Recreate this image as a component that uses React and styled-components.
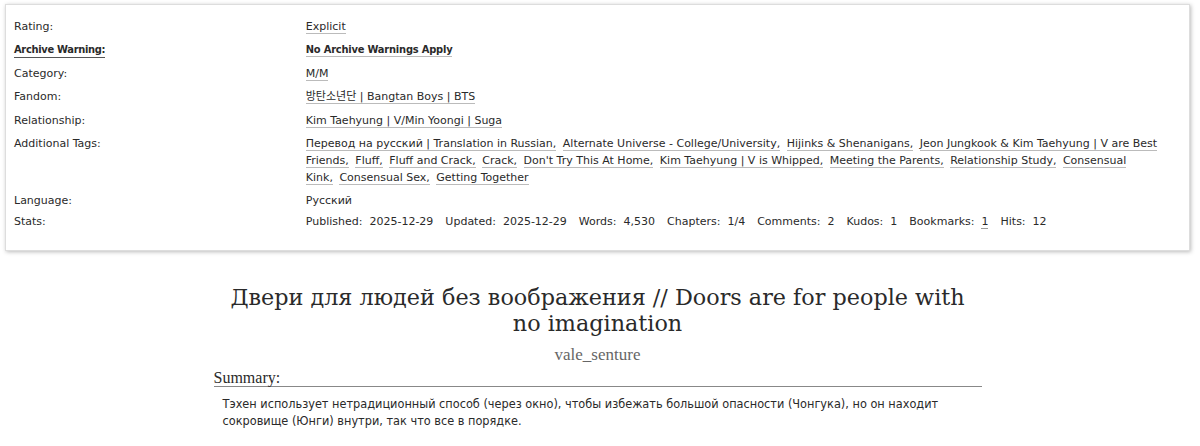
import styled, { createGlobalStyle } from "styled-components";

const GlobalStyle = createGlobalStyle`
  body {
    margin: 0;
    background: #fff;
    color: #2a2a2a;
    font-family: "DejaVu Sans", "Noto Sans CJK KR", sans-serif;
  }
`;

const Page = styled.div`
  padding: 4px 10px 0 5px;
`;

const MetaBox = styled.dl`
  margin: 0;
  width: 1185px;
  box-sizing: border-box;
  border: 1px solid #ddd;
  box-shadow: 1px 1px 4px #bbb;
  padding: 13px 8px 20px;
  display: grid;
  grid-template-columns: 25% 73%;
  row-gap: 6.4px;
  font-size: 11px;
  line-height: 17px;
`;

const Label = styled.dt`
  margin: ${(p) => (p.$pull ? "-3px 0 0" : "0")};
  font-family: ${(p) => (p.$strong ? '"DejaVu Sans Condensed", "DejaVu Sans", sans-serif' : "inherit")};
  font-weight: ${(p) => (p.$strong ? "bold" : "normal")};
  letter-spacing: ${(p) => (p.$strong ? "-0.3px" : "0")};
  span {
    border-bottom: ${(p) => (p.$strong ? "1px solid #555" : "none")};
    padding-bottom: 1px;
  }
`;

const Value = styled.dd`
  margin: ${(p) => (p.$pull ? "-3px 0 0" : "0")};
  font-family: ${(p) => (p.$strong ? '"DejaVu Sans Condensed", "DejaVu Sans", sans-serif' : "inherit")};
  font-weight: ${(p) => (p.$strong ? "bold" : "normal")};
  letter-spacing: ${(p) => (p.$strong ? "-0.2px" : "0")};
`;

const Tag = styled.a`
  color: #2a2a2a;
  text-decoration: none;
  border-bottom: 1px solid #bbb;
  margin-right: ${(p) => (p.$last ? "0" : "3px")};
`;

const Stats = styled.dl`
  margin: 0;
  display: flex;
  flex-wrap: wrap;
  dt {
    margin: 0 7px 0 0;
  }
  dd {
    margin: 0 12px 0 0;
  }
`;

const Counted = styled.span`
  border-bottom: 1px solid #999;
`;

const Work = styled.div`
  width: 768px;
  margin: 0 auto;
  padding-top: 33px;
  font-family: "Liberation Serif", serif;
`;

const Title = styled.h2`
  margin: 0;
  padding: 0 12px;
  text-align: center;
  font-family: "DejaVu Serif", serif;
  font-weight: normal;
  font-size: 22.3px;
  line-height: 26px;
  color: #2a2a2a;
`;

const Byline = styled.h3`
  margin: 10px 0 0;
  text-align: center;
  font-weight: normal;
  font-size: 17px;
  line-height: 18px;
  color: #666;
`;

const SummaryHead = styled.h3`
  margin: 5px 0 0;
  font-weight: normal;
  font-size: 16px;
  line-height: 17px;
  border-bottom: 1px solid #888;
`;

const SummaryText = styled.p`
  margin: 8px 0 0 9px;
  font-family: "Liberation Sans Narrow", "DejaVu Sans Condensed", sans-serif;
  font-size: 12.6px;
  line-height: 17px;
`;

const tags = [
  "Перевод на русский | Translation in Russian",
  "Alternate Universe - College/University",
  "Hijinks & Shenanigans",
  "Jeon Jungkook & Kim Taehyung | V are Best Friends",
  "Fluff",
  "Fluff and Crack",
  "Crack",
  "Don't Try This At Home",
  "Kim Taehyung | V is Whipped",
  "Meeting the Parents",
  "Relationship Study",
  "Consensual Kink",
  "Consensual Sex",
  "Getting Together",
];

const stats = [
  ["Published:", "2025-12-29"],
  ["Updated:", "2025-12-29"],
  ["Words:", "4,530"],
  ["Chapters:", "1/4"],
  ["Comments:", "2"],
  ["Kudos:", "1"],
  ["Bookmarks:", "1", true],
  ["Hits:", "12"],
];

const TagList = ({ items }) =>
  items.map((t, i) => (
    <span key={t}>
      <Tag href="#" $last={i === items.length - 1}>
        {t}
        {i < items.length - 1 ? "," : ""}
      </Tag>{" "}
    </span>
  ));

export default function App() {
  return (
    <>
      <GlobalStyle />
      <Page>
        <MetaBox>
          <Label>Rating:</Label>
          <Value><Tag href="#" $last>Explicit</Tag></Value>
          <Label $strong><span>Archive Warning:</span></Label>
          <Value $strong><Tag href="#" $last>No Archive Warnings Apply</Tag></Value>
          <Label>Category:</Label>
          <Value><Tag href="#" $last>M/M</Tag></Value>
          <Label>Fandom:</Label>
          <Value><Tag href="#" $last>방탄소년단 | Bangtan Boys | BTS</Tag></Value>
          <Label>Relationship:</Label>
          <Value><Tag href="#" $last>Kim Taehyung | V/Min Yoongi | Suga</Tag></Value>
          <Label>Additional Tags:</Label>
          <Value><TagList items={tags} /></Value>
          <Label>Language:</Label>
          <Value>Русский</Value>
          <Label $pull>Stats:</Label>
          <Value $pull>
            <Stats>
              {stats.map(([k, v, link]) => (
                <span key={k} style={{ display: "contents" }}>
                  <dt>{k}</dt>
                  <dd>{link ? <Counted>{v}</Counted> : v}</dd>
                </span>
              ))}
            </Stats>
          </Value>
        </MetaBox>
        <Work>
          <Title>Двери для людей без воображения // Doors are for people with no imagination</Title>
          <Byline>vale_senture</Byline>
          <SummaryHead>Summary:</SummaryHead>
          <SummaryText>
            Тэхен использует нетрадиционный способ (через окно), чтобы избежать большой опасности (Чонгука), но он находит сокровище (Юнги) внутри, так что все в порядке.
          </SummaryText>
        </Work>
      </Page>
    </>
  );
}
